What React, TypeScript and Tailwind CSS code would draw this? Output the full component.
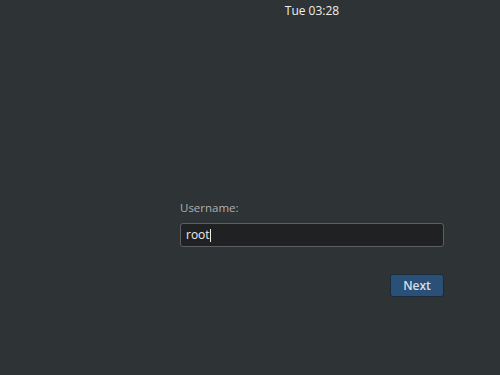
export default function App() {
  return (
    <div
      className="w-[500px] h-[375px] bg-[#2e3335] flex flex-col overflow-hidden"
      style={{ fontFamily: '"Open Sans", "Noto Sans", sans-serif' }}
    >
      <div className="h-[22px] flex items-center justify-center pl-[124px]">
        <span className="text-[12px] font-medium text-[#eeeeec] leading-none">Tue 03:28</span>
      </div>
      <div className="ml-[180px] w-[264px] mt-[180px] flex flex-col">
        <div className="text-[11.5px] text-[#aeb1b2] leading-none h-[14px]">Username:</div>
        <div className="mt-[7px] h-[24px] rounded-[3px] border border-[#5b5f60] bg-[#1f2122] flex items-center pl-[5px]">
          <span className="text-[12px] text-[#eeeeec] leading-none">root</span>
          <span className="w-[1.5px] h-[13px] bg-[#eeeeec]" />
        </div>
        <div className="flex justify-end mt-[27px]">
          <div className="w-[54px] h-[23px] rounded-[3px] border border-[#1c2a3a] bg-[#2b5078] flex items-center justify-center">
            <span className="text-[12px] font-semibold text-[#d8dee4] leading-none">Next</span>
          </div>
        </div>
      </div>
    </div>
  );
}
